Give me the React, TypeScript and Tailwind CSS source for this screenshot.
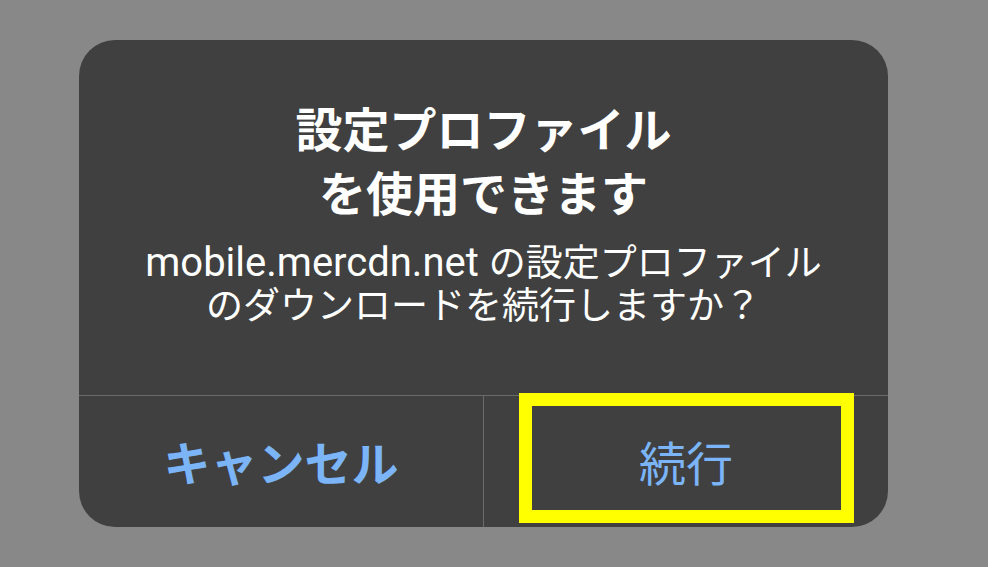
export default function App() {
  return (
    <div
      className="w-[988px] h-[567px] bg-[#888888] pt-[40px] pl-[79px]"
      style={{ fontFamily: '"Noto Sans CJK JP", sans-serif' }}
    >
      <div className="relative w-[809px] h-[487px] bg-[#404040] rounded-[36px] flex flex-col">
        <div className="h-[355px] pt-[55px] flex flex-col items-center text-white">
          <h1 className="text-[47px] leading-[64px] font-bold text-center">
            設定プロファイル
            <br />
            を使用できます
          </h1>
          <p className="mt-[17px] text-[37px] leading-[40px] text-center">
            <span className="text-[40px] leading-[40px]" style={{ fontFamily: '"Roboto", sans-serif' }}>
              mobile.mercdn.net{' '}
            </span>
            の設定プロファイル
            <br />
            のダウンロードを続行しますか？
          </p>
        </div>
        <div className="flex-1 flex border-t border-[#6b6b6b]">
          <button className="w-[405px] flex items-center justify-center text-[47px] font-bold text-[#7bb5f8] border-r border-[#6b6b6b]">
            キャンセル
          </button>
          <button className="flex-1 flex items-center justify-center text-[47px] text-[#7bb5f8]">
            続行
          </button>
        </div>
        <div className="absolute left-[440px] top-[353px] w-[335px] h-[130px] border-[13px] border-[#ffff00] pointer-events-none" />
      </div>
    </div>
  )
}
